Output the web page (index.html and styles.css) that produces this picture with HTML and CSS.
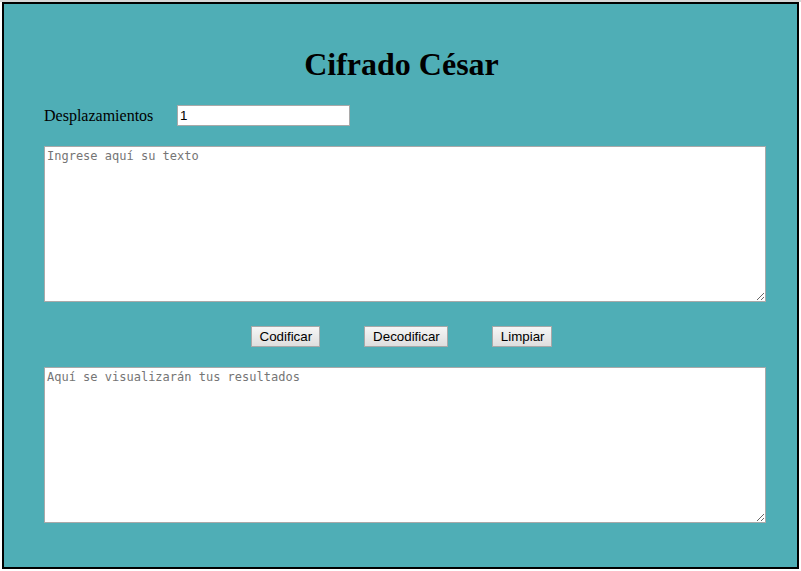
FILE: index.html
```html
<!DOCTYPE html>
<html lang="es">
<head>
<meta charset="utf-8">
<title>Cifrado César</title>
<link rel="stylesheet" href="styles.css">
</head>
<body>
<main class="panel">
  <h1 class="title">Cifrado César</h1>
  <div class="offset-row">
    <label class="offset-label" for="offset">Desplazamientos</label>
    <input class="offset-input" id="offset" type="text" value="1">
  </div>
  <textarea class="text-box" placeholder="Ingrese aquí su texto"></textarea>
  <div class="actions">
    <button class="btn" type="button">Codificar</button>
    <button class="btn" type="button">Decodificar</button>
    <button class="btn" type="button">Limpiar</button>
  </div>
  <textarea class="text-box" placeholder="Aquí se visualizarán tus resultados"></textarea>
</main>
</body>
</html>
```
FILE: styles.css
```css
html, body {
  margin: 0;
  padding: 0;
  background: #ffffff;
}
body {
  border-top: 2px solid #d6d6d6;
  font-family: "Liberation Serif", "Times New Roman", serif;
}
.panel {
  box-sizing: border-box;
  margin: 0 2px 0 2px;
  width: 797px;
  height: 567px;
  border: 2px solid #000;
  background: #4faeb6;
  padding: 42px 0 0 40px;
  display: flex;
  flex-direction: column;
}
.title {
  margin: 0 0 22px 0;
  font-size: 32px;
  font-weight: bold;
  text-align: center;
  line-height: 37px;
  padding-right: 38px;
}
.offset-row {
  display: flex;
  align-items: center;
  height: 21px;
}
.offset-label {
  font-size: 16px;
  width: 133px;
  color: #000;
}
.offset-input {
  box-sizing: border-box;
  width: 173px;
  height: 21px;
  margin: 0;
  border: 1px solid #a9a9a9;
  padding: 1px 2px;
  font-family: "Liberation Sans", Arial, sans-serif;
  font-size: 13.33px;
  background: #fff;
  color: #000;
}
.text-box {
  box-sizing: border-box;
  display: block;
  width: 722px;
  height: 156px;
  margin: 20px 0 0 0;
  border: 1px solid #a9a9a9;
  padding: 2px;
  font-family: "DejaVu Sans Mono", "Liberation Mono", monospace;
  font-size: 12px;
  background: #fff;
  resize: both;
}
.text-box::placeholder {
  color: #757575;
}
.actions {
  display: flex;
  justify-content: center;
  gap: 44px;
  margin: 24px 0 0 -38px;
  height: 22px;
}
.btn {
  box-sizing: border-box;
  height: 21px;
  margin: 0;
  padding: 1px 7px 1px 8px;
  border: 1px solid #a8a8a8;
  border-radius: 0;
  background: linear-gradient(#f6f6f6, #dedede);
  font-family: "Liberation Sans", Arial, sans-serif;
  font-size: 13.33px;
  color: #000;
}
.actions + .text-box {
  margin-top: 19px;
}
```
